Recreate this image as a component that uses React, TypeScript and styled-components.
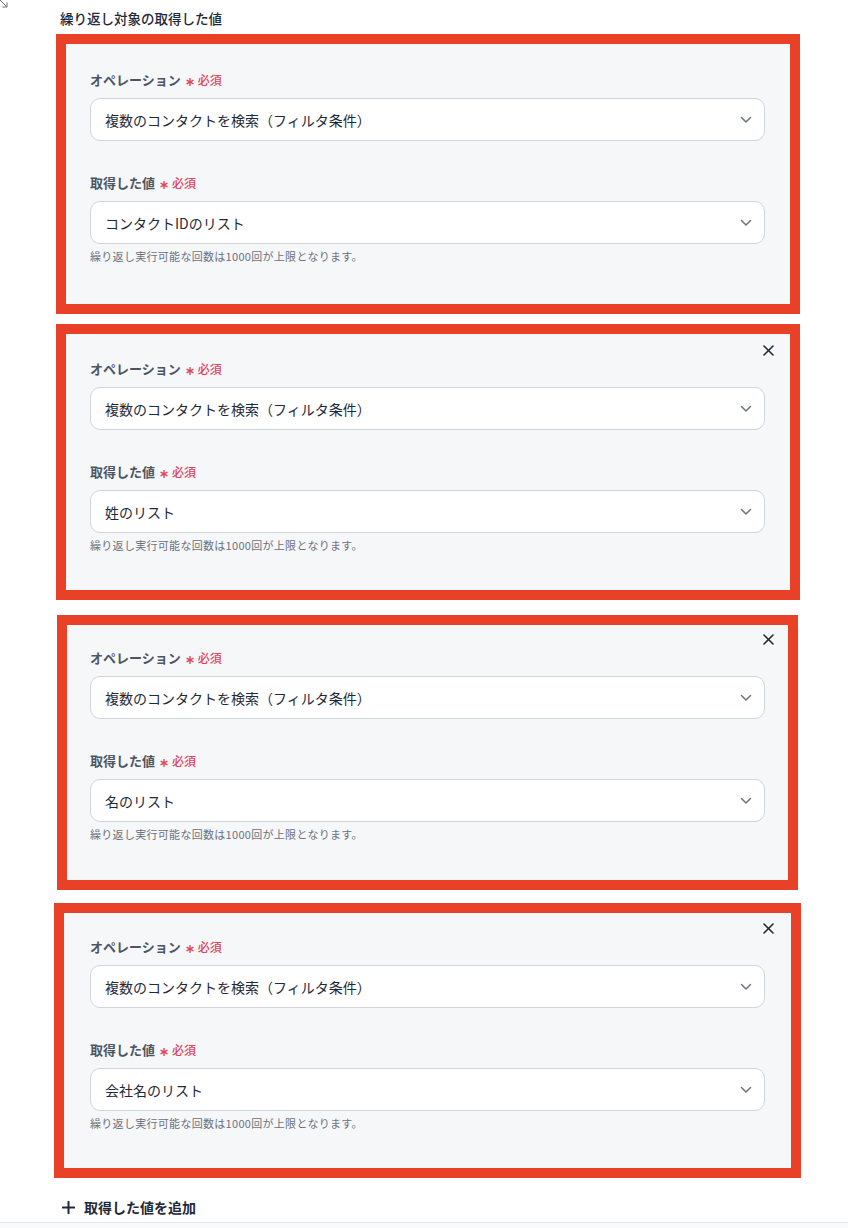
import React from "react";
import styled, { createGlobalStyle } from "styled-components";

const GlobalStyle = createGlobalStyle`
  html, body { margin: 0; padding: 0; background: #ffffff; }
  body {
    font-family: "Noto Sans CJK JP", "Noto Sans", "Liberation Sans", sans-serif;
    color: #1f2937;
  }
  * { box-sizing: border-box; }
`;

const Page = styled.div`
  position: relative;
  width: 848px;
  height: 1228px;
  display: flex;
  flex-direction: column;
  overflow: hidden;
`;

const CornerIcon = styled.svg`
  position: absolute;
  left: 0;
  top: 0;
`;

const Title = styled.div`
  margin: 8px 0 0 60px;
  height: 20px;
  line-height: 20px;
  font-size: 13.5px;
  font-weight: 500;
  color: #1f2937;
`;

const Card = styled.section<{ $mt: number; $ml: number; $w: number; $pt: number; $pb: number }>`
  margin-top: ${(p) => p.$mt}px;
  margin-left: ${(p) => p.$ml}px;
  width: ${(p) => p.$w}px;
  border: 10px solid #e94128;
  background: #f6f7f9;
  padding-top: ${(p) => p.$pt}px;
  padding-bottom: ${(p) => p.$pb}px;
  padding-left: ${(p) => 90 - p.$ml - 10}px;
  padding-right: ${(p) => p.$ml + p.$w - 10 - 765}px;
`;

const Fields = styled.div`
  position: relative;
  display: flex;
  flex-direction: column;
`;

const CloseButton = styled.button`
  position: absolute;
  top: -14px;
  right: -9px;
  width: 11px;
  height: 11px;
  padding: 0;
  border: none;
  background: transparent;
  display: flex;
  cursor: pointer;
`;

const Label = styled.div<{ $mt?: number }>`
  margin-top: ${(p) => p.$mt ?? 0}px;
  height: 20px;
  line-height: 20px;
  display: flex;
  align-items: center;
  font-size: 13px;
  font-weight: 700;
  color: #4b5563;
`;

const Required = styled.span`
  display: inline-flex;
  align-items: center;
  margin-left: 5px;
  font-size: 12px;
  font-weight: 500;
  color: #e0435a;
  gap: 4px;
`;

const Select = styled.div`
  margin-top: 8px;
  height: 43px;
  border: 1px solid #d1d5db;
  border-radius: 10px;
  background: #ffffff;
  display: flex;
  align-items: center;
  justify-content: space-between;
  padding: 0 12px 0 14px;
  font-size: 14px;
  color: #1f2937;
`;

const Help = styled.div`
  margin-top: 4px;
  height: 16px;
  line-height: 16px;
  font-size: 11px;
  letter-spacing: 0.3px;
  color: #6b7280;
`;

const AddRow = styled.div`
  margin: 19px 0 0 62px;
  height: 20px;
  display: flex;
  align-items: center;
  gap: 9px;
  font-size: 14px;
  font-weight: 700;
  color: #1f2937;
`;

const Footer = styled.div`
  margin-top: auto;
  height: 6px;
  border-top: 1px solid #e5e7eb;
  background: #f9fafb;
`;

const Chevron = () => (
  <svg width="12" height="8" viewBox="0 0 12 8" fill="none">
    <polyline points="1.5,1.5 6,6 10.5,1.5" stroke="#6b7280" strokeWidth="1.5" strokeLinecap="round" strokeLinejoin="round" />
  </svg>
);

const Asterisk = () => (
  <svg width="8" height="8" viewBox="0 0 8 8" style={{ marginTop: 3 }}>
    <g stroke="#e0435a" strokeWidth="1.4" strokeLinecap="round">
      <line x1="4" y1="0.6" x2="4" y2="7.4" />
      <line x1="1.05" y1="2.3" x2="6.95" y2="5.7" />
      <line x1="1.05" y1="5.7" x2="6.95" y2="2.3" />
    </g>
  </svg>
);

const XIcon = () => (
  <svg width="11" height="11" viewBox="0 0 11 11">
    <g stroke="#1f2937" strokeWidth="1.6" strokeLinecap="round">
      <line x1="1" y1="1" x2="10" y2="10" />
      <line x1="10" y1="1" x2="1" y2="10" />
    </g>
  </svg>
);

const PlusIcon = () => (
  <svg width="13" height="13" viewBox="0 0 13 13">
    <g stroke="#1f2937" strokeWidth="2" strokeLinecap="round">
      <line x1="6.5" y1="0.8" x2="6.5" y2="12.2" />
      <line x1="0.8" y1="6.5" x2="12.2" y2="6.5" />
    </g>
  </svg>
);

type CardData = {
  value: string;
  closable: boolean;
  mt: number;
  ml: number;
  w: number;
  pt: number;
  pb: number;
};

const cards: CardData[] = [
  { value: "コンタクトIDのリスト", closable: false, mt: 6, ml: 56, w: 744, pt: 26, pb: 40 },
  { value: "姓のリスト", closable: true, mt: 10, ml: 56, w: 744, pt: 25, pb: 37 },
  { value: "名のリスト", closable: true, mt: 15, ml: 57, w: 741, pt: 23, pb: 38 },
  { value: "会社名のリスト", closable: true, mt: 13, ml: 54, w: 747, pt: 24, pb: 37 },
];

const RequiredMark = () => (
  <Required>
    <Asterisk />
    必須
  </Required>
);

export default function App() {
  return (
    <>
      <GlobalStyle />
      <Page>
        <CornerIcon width="9" height="9" viewBox="0 0 9 9">
          <g stroke="#6b7280" strokeWidth="1" fill="none">
            <line x1="0" y1="0" x2="7" y2="7" />
            <polyline points="7,2.5 7,7 2.5,7" />
          </g>
        </CornerIcon>
        <Title>繰り返し対象の取得した値</Title>
        {cards.map((c, i) => (
          <Card key={i} $mt={c.mt} $ml={c.ml} $w={c.w} $pt={c.pt} $pb={c.pb}>
            <Fields>
              {c.closable && (
                <CloseButton aria-label="削除">
                  <XIcon />
                </CloseButton>
              )}
              <Label>
                オペレーション
                <RequiredMark />
              </Label>
              <Select>
                <span>複数のコンタクトを検索（フィルタ条件）</span>
                <Chevron />
              </Select>
              <Label $mt={32}>
                取得した値
                <RequiredMark />
              </Label>
              <Select>
                <span>{c.value}</span>
                <Chevron />
              </Select>
              <Help>繰り返し実行可能な回数は1000回が上限となります。</Help>
            </Fields>
          </Card>
        ))}
        <AddRow>
          <PlusIcon />
          取得した値を追加
        </AddRow>
        <Footer />
      </Page>
    </>
  );
}
